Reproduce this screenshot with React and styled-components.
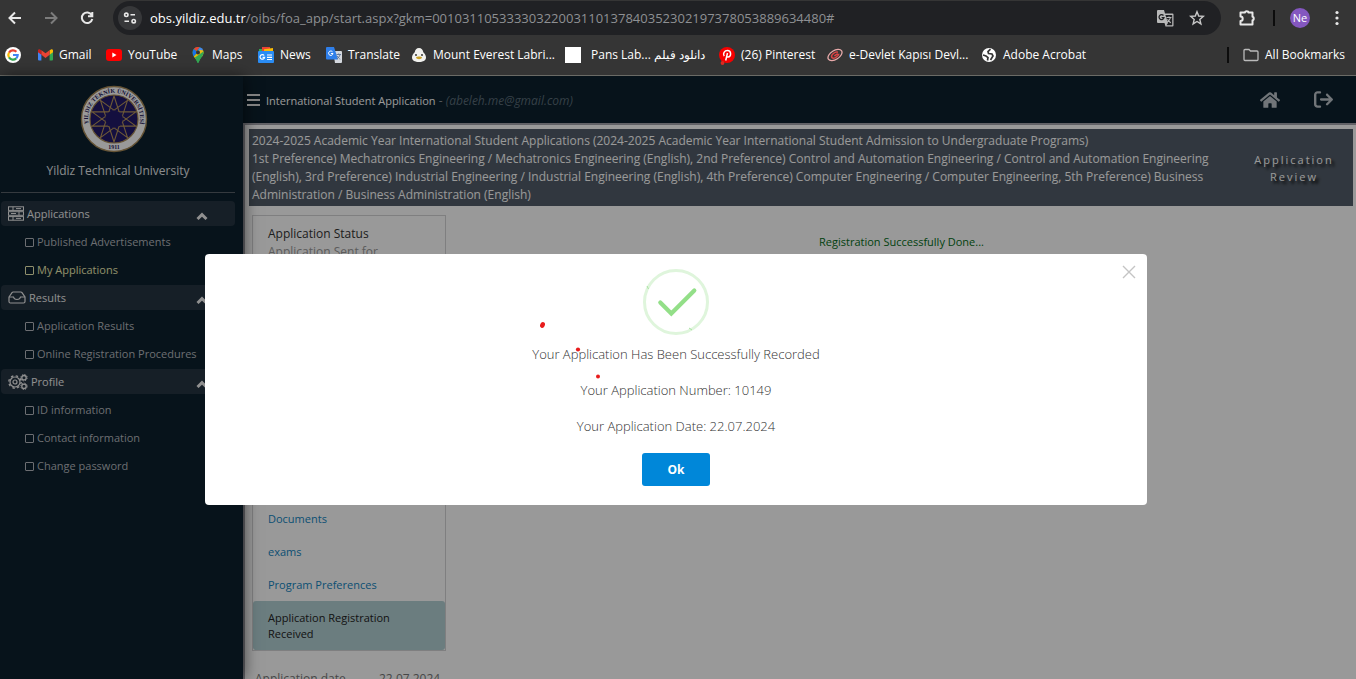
import React from "react";
import styled, { createGlobalStyle } from "styled-components";
import { FaHome } from "react-icons/fa";
import { FaArrowRightFromBracket } from "react-icons/fa6";

const ui = `"Segoe UI", "Open Sans", "Noto Sans", sans-serif`;

const GlobalStyle = createGlobalStyle`
  *, *::before { box-sizing: border-box; }
  body { margin: 0; font-family: ${ui}; font-size: 12px; }
  button, input { font-family: inherit; }
  a { text-decoration: none; color: inherit; }
  p, ul, h1, h2 { margin: 0; padding: 0; font-weight: inherit; font-size: inherit; }
  ul { list-style: none; }
`;

const Window = styled.div`
  display: flex;
  flex-direction: column;
  height: 100vh;
  overflow: hidden;
`;

/* Browser chrome */
const Chrome = styled.header`
  flex: none;
  background: #353535;
  color: #fff;
  border-bottom: 1px solid #6b6b66;
`;
const Toolbar = styled.div`
  display: flex;
  align-items: center;
  height: 36px;
  padding: 0 11px 0 6px;
`;
const ToolButton = styled.button`
  display: flex;
  align-items: center;
  justify-content: center;
  width: ${(p) => p.$w || 36}px;
  height: 32px;
  padding: 0;
  border: 0;
  background: none;
  color: ${(p) => p.$color || "#e8e8e8"};
`;
const AddressBar = styled.div`
  flex: 1;
  min-width: 0;
  display: flex;
  align-items: center;
  height: 34px;
  margin: 0 7px 0 0;
  padding: 0 8px 0 5px;
  border-radius: 17px;
  background: #202124;
`;
const SiteInfo = styled.button`
  display: flex;
  align-items: center;
  justify-content: center;
  width: 24px;
  height: 24px;
  padding: 0;
  border: 0;
  border-radius: 50%;
  background: #37383a;
  color: #e8e8e8;
`;
const Url = styled.div`
  flex: 1;
  min-width: 0;
  margin-left: 8px;
  overflow: hidden;
  white-space: nowrap;
  font-size: 13px;
  line-height: 20px;
  color: #8e9093;
  b { color: #fff; font-weight: 400; }
`;
const Separator = styled.span`
  width: 2px;
  height: 16px;
  background: #0c0c0c;
`;
const Avatar = styled.button`
  width: 20px;
  height: 20px;
  margin: 0 19px 0 8px;
  padding: 0;
  border: 0;
  border-radius: 50%;
  background: #8457c0;
  color: #fff;
  font-size: 11px;
  line-height: 20px;
`;
const Bookmarks = styled.nav`
  display: flex;
  align-items: center;
  height: 39px;
  padding: 0 11px 1px 5px;
`;
const Bookmark = styled.a`
  flex: none;
  display: flex;
  align-items: center;
  gap: ${(p) => p.$gap || 6}px;
  width: ${(p) => (p.$w ? p.$w + "px" : "auto")};
  white-space: nowrap;
  font-size: 12px;
  line-height: 16px;
  svg { flex: none; }
`;
const Spacer = styled.span`
  flex: 1;
`;

/* Web page */
const Page = styled.div`
  position: relative;
  flex: 1;
  min-height: 0;
  display: flex;
  background: #0c202d;
`;
const Sidebar = styled.aside`
  position: relative;
  z-index: 1;
  flex: none;
  width: 243px;
  padding: 9px 8px 0 1px;
  background: #0c202d;
  box-shadow: 2px 0 14px rgba(0, 0, 0, 0.5);
`;
const Brand = styled.div`
  display: flex;
  flex-direction: column;
  align-items: center;
  gap: 8px;
  padding: 0 0 11px;
  border-bottom: 1px solid #59626a;
  color: #e4e7e9;
  font-size: 12px;
  line-height: 20px;
  svg { margin-right: 8px; }
`;
const Menu = styled.nav`
  padding-top: 8px;
`;
const MenuGroup = styled.section`
  padding-bottom: 1px;
`;
const GroupTitle = styled.button`
  display: flex;
  align-items: center;
  gap: 3px;
  width: 100%;
  height: 25px;
  margin-bottom: 2px;
  padding: 0 27px 0 7px;
  border: 0;
  border-radius: 4px;
  background: #263442;
  color: #f0f0f0;
  font-size: 11px;
  font-weight: 500;
  line-height: 18px;
  text-align: left;
  span { flex: 1; }
`;
const MenuItem = styled.a`
  display: flex;
  align-items: center;
  gap: 3px;
  height: 28px;
  padding-left: 24px;
  color: ${(p) => (p.$active ? "#eeeeb4" : "#b4b8be")};
  font-size: 11px;
  font-weight: 500;
  line-height: 16px;
  white-space: nowrap;
  &::before {
    content: "";
    width: 9px;
    height: 9px;
    border: 1px solid currentColor;
    border-radius: 1px;
  }
`;
const Main = styled.div`
  flex: 1;
  min-width: 0;
  display: flex;
  flex-direction: column;
`;
const TopBar = styled.div`
  position: relative;
  z-index: 2;
  flex: none;
  display: flex;
  align-items: center;
  height: 47px;
  padding: 0 23px 0 4px;
  color: #fff;
`;
const MenuToggle = styled.button`
  display: flex;
  padding: 0;
  border: 0;
  background: none;
  color: #d4d4d4;
`;
const AppTitle = styled.h1`
  flex: 1;
  margin-left: 6px;
  padding-top: 2px;
  font-family: "Open Sans", sans-serif;
  font-size: 12px;
  line-height: 18px;
  b { font-size: 11px; font-weight: 500; }
  span { color: #8b9299; }
  em { color: #5b6c78; }
`;
const TopIcon = styled.a`
  display: flex;
  margin-left: 34px;
  color: #bcc4ca;
`;
const Content = styled.main`
  flex: 1;
  min-height: 0;
  overflow: hidden;
  padding: 4px 3px 0 4px;
  border-top: 2px solid #a4a4ac;
  border-left: 2px solid #a4a4ac;
  background: #fff;
`;
const Banner = styled.section`
  display: flex;
  align-items: center;
  justify-content: space-between;
  height: 77px;
  padding: 0 3px;
  background: #535d69;
  color: #fff;
  font-family: "Open Sans", sans-serif;
`;
const BannerText = styled.div`
  max-width: 966px;
  font-size: 12px;
  line-height: 18px;
`;
const ReviewTag = styled.div`
  width: 112px;
  text-align: center;
  font-size: 11px;
  font-weight: 500;
  line-height: 17px;
  letter-spacing: 2px;
  text-shadow: 3px 3px 3px #000;
`;
const Columns = styled.div`
  display: flex;
  padding: 9px 0 0 3px;
`;
const SideColumn = styled.div`
  flex: none;
  width: 194px;
`;
const StepPanel = styled.section`
  display: flex;
  flex-direction: column;
  height: 436px;
  border: 1px solid #d4d4d6;
`;
const Status = styled.div`
  padding: 9px 15px;
  font-size: 12px;
  line-height: 18px;
  color: #333;
  p { color: #999; }
`;
const Steps = styled.ul`
  margin-top: auto;
`;
const Step = styled.a`
  display: block;
  padding: 9px 15px 8px;
  border-radius: 3px;
  font-size: 11px;
  font-weight: 500;
  line-height: 16px;
  color: ${(p) => (p.$active ? "#222" : "#1285c1")};
  background: ${(p) => (p.$active ? "#b2d0d4" : "transparent")};
`;
const DateRow = styled.dl`
  display: flex;
  margin: 19px 3px 0;
  color: #777;
  font-size: 12px;
  line-height: 18px;
  dt { width: 124px; }
  dd { margin: 0; }
`;
const Result = styled.p`
  flex: 1;
  padding: 18px 0 0 4px;
  text-align: center;
  color: #046e18;
  font-size: 11px;
  font-weight: 500;
  line-height: 18px;
`;

/* Dialog */
const Overlay = styled.div`
  position: absolute;
  inset: 0;
  z-index: 5;
  display: flex;
  align-items: center;
  justify-content: center;
  padding: 4px 4px 0 0;
  background: rgba(0, 0, 0, 0.4);
`;
const Dialog = styled.div`
  position: relative;
  width: 70%;
  max-width: 942px;
  display: flex;
  flex-direction: column;
  align-items: center;
  padding: 15px 20px 19px;
  border-radius: 4px;
  background: #fff;
`;
const CloseButton = styled.button`
  position: absolute;
  top: 11px;
  right: 11px;
  display: flex;
  padding: 0;
  border: 0;
  background: none;
  color: #c4c4c4;
`;
const Message = styled.div`
  display: flex;
  flex-direction: column;
  gap: 18px;
  margin: 10px 0 18px;
  text-align: center;
  color: #333;
  font-weight: 300;
  font-size: 13px;
  line-height: 18px;
`;
const OkButton = styled.button`
  width: 68px;
  height: 33px;
  padding: 0;
  border: 0;
  border-radius: 3px;
  background: #0087d9;
  color: #fff;
  font-size: 12px;
  font-weight: 700;
`;
const Marks = styled.svg`
  position: absolute;
  top: 60px;
  left: 50%;
  margin-left: -141px;
  pointer-events: none;
`;

const stroke = { fill: "none", stroke: "currentColor", strokeWidth: 2 };

function Seal() {
  const point = (i, r) => {
    const a = (i * Math.PI) / 5 - Math.PI / 2;
    return `${(34 + r * Math.cos(a)).toFixed(1)},${(34 + r * Math.sin(a)).toFixed(1)}`;
  };
  const pentagram = (start) => [0, 4, 8, 2, 6].map((i) => point(i + start, 23)).join(" ");
  return (
    <svg width="68" height="68" viewBox="0 0 68 68" aria-label="Yildiz Technical University seal">
      <circle cx="34" cy="34" r="32.5" fill="#fff" stroke="#a88a58" strokeWidth="1.4" />
      <circle cx="34" cy="34" r="24" fill="#221a6a" stroke="#a88a58" strokeWidth="1.2" />
      <g fill="none" stroke="#b8965c" strokeWidth="1.1">
        <polygon points={pentagram(0)} />
        <polygon points={pentagram(1)} />
      </g>
      <circle cx="34" cy="34" r="8.8" fill="#221a6a" />
      <path id="seal-arc" d="M11.5 47 A26 26 0 1 1 56.5 47" fill="none" />
      <text fontFamily="Liberation Serif, serif" fontSize="6" fontWeight="700" fill="#28225c" textAnchor="middle">
        <textPath href="#seal-arc" startOffset="50%">YILDIZ TEKNİK ÜNİVERSİTESİ</textPath>
      </text>
      <text x="34" y="64" fontFamily="Liberation Serif, serif" fontSize="6" fontWeight="700" fill="#28225c" textAnchor="middle">1911</text>
    </svg>
  );
}

const GoogleIcon = () => (
  <svg width="16" height="16" viewBox="0 0 16 16">
    <circle cx="8" cy="8" r="8" fill="#fff" />
    <g fill="none" strokeWidth="2.2">
      <path d="M11.4 4.8A4.7 4.7 0 0 0 4 5.6" stroke="#ea4335" />
      <path d="M4 5.6a4.7 4.7 0 0 0 0 4.8" stroke="#fbbc05" />
      <path d="M4 10.4a4.7 4.7 0 0 0 7.2 1" stroke="#34a853" />
      <path d="M11.2 11.4A4.7 4.7 0 0 0 12.7 8H8" stroke="#4285f4" />
    </g>
  </svg>
);
const GmailIcon = () => (
  <svg width="15" height="12" viewBox="0 0 15 12">
    <path d="M0 2.5 3.4 5v6.5H1a1 1 0 0 1-1-1z" fill="#4285f4" />
    <path d="M15 2.5 11.6 5v6.5H14a1 1 0 0 0 1-1z" fill="#34a853" />
    <path d="M11.6 1.2 13 .4c1-.6 2 .1 2 1.2v1.6L11.6 5.8z" fill="#fbbc04" />
    <path d="M3.4 1.2 2 .4C1 -.2 0 .5 0 1.6v1.6l3.4 2.6z" fill="#c5221f" />
    <path d="M3.4 1.2 7.5 4.3l4.1-3.1v4.6L7.5 8.9 3.4 5.8z" fill="#ea4335" />
  </svg>
);
const YouTubeIcon = () => (
  <svg width="16" height="12" viewBox="0 0 16 12">
    <rect width="16" height="12" rx="3" fill="#f00" />
    <path d="M6.3 3.5 10.5 6 6.3 8.5z" fill="#fff" />
  </svg>
);
const MapsIcon = () => (
  <svg width="12" height="16" viewBox="0 0 12 16">
    <path d="M6 16c-.6 0-.7-1.600-2-3.600C2.500 10 .5 8.600.5 5.500A5.500 5.500 0 0 1 11.500 5.500c0 3.100-2 4.500-3.500 6.900C6.700 14.400 6.600 16 6 16z" fill="#34a853" />
    <path d="M1.800 2A5.500 5.500 0 0 1 7.700.3L4.300 4.200z" fill="#ea4335" />
    <path d="M7.700.3a5.500 5.500 0 0 1 3.300 2.800L7.900 6.700 6 3z" fill="#4285f4" />
    <path d="M1.800 9.500C.4 7.500.1 4 1.800 2l2.500 2.200L4.200 6.700z" fill="#1a73e8" />
    <path d="M1.800 9.500 8 2.700l3.200.8c.7 2 .2 4.200-1.200 6L3.700 12z" fill="#fbbc04" opacity=".9" />
    <path d="M2.700 10.700 11.400 4.500c.5 3.900-2 5.300-3.400 7.900C6.700 14.400 6.600 16 6 16s-.7-1.600-2-3.600z" fill="#34a853" />
    <circle cx="6" cy="5.500" r="2" fill="#353535" />
  </svg>
);
const NewsIcon = () => (
  <svg width="16" height="16" viewBox="0 0 16 16">
    <path d="M1 2h9v4H1z" fill="#34a853" />
    <path d="M4 0h8v5H4z" fill="#ea4335" />
    <path d="M6 2.200 15 1v4H6z" fill="#fbbc04" />
    <rect y="4" width="16" height="12" rx="1" fill="#2a8cf4" />
    <path d="M6.200 8.500A2.300 2.300 0 1 0 6.600 10.400H4.600M9 8h5M9 10.300h5M9 12.500h5" stroke="#fff" strokeWidth="1.200" fill="none" />
  </svg>
);
const TranslateIcon = () => (
  <svg width="16" height="16" viewBox="0 0 16 16">
    <path d="M7 4h8a1 1 0 0 1 1 1v10a1 1 0 0 1-1 1H9z" fill="#d4d8de" />
    <path d="M1 0h7l4 12.500H1a1 1 0 0 1-1-1V1a1 1 0 0 1 1-1z" fill="#2f7fea" />
    <path d="M6.500 4.800A2.200 2.200 0 1 0 7 6.500H4.900" stroke="#fff" fill="none" />
    <path d="M10.500 7.500H15M12.700 6.500v1M14 7.500c-.4 2-1.500 3.300-3 4.300M11.300 9c.7 1.500 1.900 2.700 3 3.200" stroke="#5c7397" fill="none" strokeWidth=".9" />
  </svg>
);
const DuckIcon = () => (
  <svg width="14" height="16" viewBox="0 0 14 16">
    <path d="M7 1c2.600 0 3.800 2 4.300 4.200C13 6.500 14 8.800 14 10.500 14 13.500 11 15 7 15S0 13.500 0 10.500C0 8.800 1 6.500 2.700 5.200 3.200 3 4.400 1 7 1z" fill="#f1f1ee" />
    <circle cx="4" cy="8" r=".9" fill="#222" />
    <circle cx="10" cy="8" r=".9" fill="#222" />
    <path d="M4 10.500c1-1.400 5-1.400 6 0-.6 2.200-5.400 2.200-6 0z" fill="#c9a227" />
  </svg>
);
const BlankIcon = () => (
  <svg width="16" height="16"><rect width="16" height="16" fill="#fff" /></svg>
);
const PinterestIcon = () => (
  <svg width="16" height="20" viewBox="0 0 16 20">
    <circle cx="8" cy="10" r="8" fill="#f60000" />
    <path d="M5.200 11.200C3.500 8.500 5.500 5.600 8.400 5.600c4.300 0 4 6.400.7 6.400-1 0-1.400-.7-1.400-.7M8.500 8 6.700 15.500" stroke="#fff" strokeWidth="1.500" fill="none" />
    <circle cx="3.500" cy="18" r="1.900" fill="#dd2a20" />
  </svg>
);
const DevletIcon = () => (
  <svg width="16" height="14" viewBox="0 0 16 14" fill="none">
    <g transform="rotate(-32 8 7)">
      <ellipse cx="8" cy="7" rx="7.800" ry="4.400" stroke="#e8aaaa" strokeWidth="1.300" />
      <path d="M12 6.200C10 3.800 4.500 4.600 4 7.200s6 3.200 8 .8M7 7.400h4" stroke="#dd4545" strokeWidth="1.500" />
    </g>
  </svg>
);
const GlobeIcon = () => (
  <svg width="16" height="16" viewBox="0 0 16 16">
    <circle cx="8" cy="8" r="7" fill="#fff" />
    <path d="M9.500 2.200 7 4.500l.5 2 3.500.5 1 2-2.500 4M2 8l3 1 2 1.500-.5 3" stroke="#353535" strokeWidth="1.700" fill="none" />
  </svg>
);
const FolderIcon = () => (
  <svg width="16" height="14" viewBox="0 0 16 14">
    <path d="M1 2.500a1 1 0 0 1 1-1h4L7.500 3H14a1 1 0 0 1 1 1v7.500a1 1 0 0 1-1 1H2a1 1 0 0 1-1-1z" fill="none" stroke="#bbb" strokeWidth="1.300" />
  </svg>
);

const bookmarks = [
  { label: "", name: "Google", icon: <GoogleIcon />, w: 33 },
  { label: "Gmail", icon: <GmailIcon />, w: 68 },
  { label: "YouTube", icon: <YouTubeIcon />, w: 86 },
  { label: "Maps", icon: <MapsIcon />, w: 66, gap: 8 },
  { label: "News", icon: <NewsIcon />, w: 68 },
  { label: "Translate", icon: <TranslateIcon />, w: 86 },
  { label: "Mount Everest Labri...", icon: <DuckIcon />, w: 153, gap: 7 },
  { label: "Pans Lab... دانلود فیلم", icon: <BlankIcon />, w: 154, gap: 10 },
  { label: "(26) Pinterest", icon: <PinterestIcon />, w: 108 },
  { label: "e-Devlet Kapısı Devl...", icon: <DevletIcon />, w: 154 },
  { label: "Adobe Acrobat", icon: <GlobeIcon /> },
];

const ServerIcon = () => (
  <svg width="16" height="15" viewBox="0 0 16 15" fill="none" stroke="currentColor">
    <rect x=".5" y=".8" width="15" height="3.600" />
    <rect x=".5" y="5.700" width="15" height="3.600" />
    <rect x=".5" y="10.600" width="15" height="3.600" />
    <path d="M8 2.600h5M3 7.500h5M8 12.400h5M11 5.700v3.600M5 .8v3.600M5 10.600v3.600" />
  </svg>
);
const InboxIcon = () => (
  <svg width="18" height="13" viewBox="0 0 18 13" fill="none" stroke="currentColor" strokeWidth="1.200">
    <path d="M1 6 4 1.600Q4.400 1 5.200 1h7.600q.8 0 1.200.6L17 6v4.500q0 1.500-1.500 1.500h-13Q1 12 1 10.500z" />
    <path d="M1 6h4.500q.5 2.500 3.500 2.500T12.500 6H17" />
  </svg>
);
const GearsIcon = () => (
  <svg width="20" height="16" viewBox="0 0 20 16" fill="none" stroke="currentColor">
    <circle cx="7" cy="8" r="5" strokeWidth="1.200" />
    <circle cx="7" cy="8" r="6.200" strokeWidth="1.400" strokeDasharray="2.400 2.470" />
    <circle cx="7" cy="8" r="2" strokeWidth="1.200" />
    <circle cx="16" cy="3.700" r="2.200" strokeWidth="1.300" />
    <circle cx="16" cy="3.700" r="3.200" strokeDasharray="1.300 1.210" />
    <circle cx="16" cy="12.300" r="2.200" strokeWidth="1.300" />
    <circle cx="16" cy="12.300" r="3.200" strokeDasharray="1.300 1.210" />
  </svg>
);
const ChevronIcon = () => (
  <svg width="12" height="8" viewBox="0 0 12 8">
    <path d="M1.500 7 6 2.600 10.500 7" fill="none" stroke="#f0f0f0" strokeWidth="2.900" />
  </svg>
);
const Chevron = styled.i`
  display: flex;
  padding-top: 5px;
`;

const menu = [
  { title: "Applications", icon: <ServerIcon />, items: ["Published Advertisements", "My Applications"] },
  { title: "Results", icon: <InboxIcon />, items: ["Application Results", "Online Registration Procedures"] },
  { title: "Profile", icon: <GearsIcon />, items: ["ID information", "Contact information", "Change password"] },
];

export default function App() {
  return (
    <>
      <GlobalStyle />
      <Window>
        <Chrome>
          <Toolbar>
            <ToolButton $w={18} aria-label="Back">
              <svg width="14" height="14" viewBox="0 0 14 14" {...stroke}><path d="M13 7H2M7 1.500 1.500 7 7 12.500" /></svg>
            </ToolButton>
            <ToolButton $w={54} $color="#7c7c7c" aria-label="Forward">
              <svg width="14" height="14" viewBox="0 0 14 14" {...stroke}><path d="M1 7h11M7 1.500 12.500 7 7 12.500" /></svg>
            </ToolButton>
            <ToolButton $w={18} aria-label="Reload">
              <svg width="14" height="14" viewBox="0 0 14 14" {...stroke}><path d="M11.700 4A5.300 5.300 0 1 0 12.300 8M12.300 1v4.300H8" /></svg>
            </ToolButton>
            <ToolButton as="span" $w={17} />
            <AddressBar>
              <SiteInfo aria-label="Site information">
                <svg width="14" height="12" viewBox="0 0 14 12" fill="none" stroke="currentColor" strokeWidth="1.600">
                  <circle cx="3.300" cy="2.800" r="1.700" /><path d="M7.500 2.800H12M1.500 9.200H6" /><circle cx="10.700" cy="9.200" r="1.700" />
                </svg>
              </SiteInfo>
              <Url><b>obs.yildiz.edu.tr</b>/oibs/foa_app/start.aspx?gkm=00103110533330322003110137840352302197378053889634480#</Url>
              <ToolButton $w={32} $color="#b8b8b8" aria-label="Translate this page">
                <svg width="17" height="17" viewBox="0 0 17 17">
                  <path d="M1 0h6l1 3.500h7.500a1 1 0 0 1 1 1v11a1 1 0 0 1-1 1H8.500L7.500 13H1a1 1 0 0 1-1-1V1a1 1 0 0 1 1-1z" fill="currentColor" />
                  <path d="M8.400 5h6.800v10.200H9.400L11 13z" fill="#202124" />
                  <path d="M6.500 5.500A2.500 2.500 0 1 0 7 7.700H4.600" stroke="#202124" strokeWidth="1.300" fill="none" />
                  <path d="M9.500 7.500h5M12 6.500v1M13.500 7.500c-.5 2.200-1.700 3.500-3.200 4.500M10.500 9.300c.8 1.500 2 2.700 3.300 3.400" stroke="currentColor" strokeWidth="1.100" fill="none" />
                </svg>
              </ToolButton>
              <ToolButton $w={32} $color="#c8c8c8" aria-label="Bookmark this tab">
                <svg width="16" height="16" viewBox="0 0 16 16"><path d="m8 1.700 1.700 4.300 4.600.4-3.500 3 1.100 4.500L8 11.500l-3.900 2.400 1.100-4.500-3.500-3L6.300 6z" fill="none" stroke="currentColor" strokeWidth="1.400" /></svg>
              </ToolButton>
            </AddressBar>
            <ToolButton $w={38} aria-label="Extensions">
              <svg width="18" height="18" viewBox="0 0 18 18" {...stroke}><path d="M2.500 3.500H7a1.700 1.200 0 0 1 3.400 0H14.500v4.300a1.200 1.700 0 0 1 0 3.400V15.500H2.500v-3.600a2.100 2.100 0 0 0 0-4.400z" strokeLinejoin="round" /></svg>
            </ToolButton>
            <ToolButton as="span" $w={16}><Separator /></ToolButton>
            <Avatar aria-label="Profile">Ne</Avatar>
            <ToolButton $w={16} aria-label="Menu">
              <svg width="4" height="16" viewBox="0 0 4 16" fill="currentColor"><circle cx="2" cy="2.500" r="1.600" /><circle cx="2" cy="8" r="1.600" /><circle cx="2" cy="13.500" r="1.600" /></svg>
            </ToolButton>
          </Toolbar>
          <Bookmarks>
            {bookmarks.map((b) => (
              <Bookmark href="#" key={b.name || b.label} $w={b.w} $gap={b.gap} aria-label={b.name || b.label}>
                {b.icon}
                {b.label}
              </Bookmark>
            ))}
            <Spacer />
            <ToolButton as="span" $w={30}><Separator /></ToolButton>
            <Bookmark href="#">
              <FolderIcon />
              All Bookmarks
            </Bookmark>
          </Bookmarks>
        </Chrome>

        <Page>
          <Sidebar>
            <Brand>
              <Seal />
              Yildiz Technical University
            </Brand>
            <Menu>
              {menu.map((g) => (
                <MenuGroup key={g.title}>
                  <GroupTitle>
                    {g.icon}
                    <span>{g.title}</span>
                    <Chevron><ChevronIcon /></Chevron>
                  </GroupTitle>
                  {g.items.map((t) => (
                    <MenuItem href="#" key={t} $active={t === "My Applications"}>{t}</MenuItem>
                  ))}
                </MenuGroup>
              ))}
            </Menu>
          </Sidebar>

          <Main>
            <TopBar>
              <MenuToggle aria-label="Toggle menu">
                <svg width="13" height="12" viewBox="0 0 13 12" stroke="currentColor" strokeWidth="2"><path d="M0 1h13M0 6h13M0 11h13" /></svg>
              </MenuToggle>
              <AppTitle>
                <b>International Student Application</b> <span>-</span> <em>(abeleh.me@gmail.com)</em>
              </AppTitle>
              <TopIcon href="#" aria-label="Home"><FaHome size={20} /></TopIcon>
              <TopIcon href="#" aria-label="Sign out"><FaArrowRightFromBracket size={19} /></TopIcon>
            </TopBar>
            <Content>
              <Banner>
                <BannerText>
                  <p>2024-2025 Academic Year International Student Applications (2024-2025 Academic Year International Student Admission to Undergraduate Programs)</p>
                  <p>1st Preference) Mechatronics Engineering / Mechatronics Engineering (English), 2nd Preference) Control and Automation Engineering / Control and Automation Engineering (English), 3rd Preference) Industrial Engineering / Industrial Engineering (English), 4th Preference) Computer Engineering / Computer Engineering, 5th Preference) Business Administration / Business Administration (English)</p>
                </BannerText>
                <ReviewTag>Application Review</ReviewTag>
              </Banner>
              <Columns>
                <SideColumn>
                  <StepPanel>
                    <Status>
                      Application Status
                      <p>Application Sent for</p>
                    </Status>
                    <Steps>
                      <li><Step href="#">Documents</Step></li>
                      <li><Step href="#">exams</Step></li>
                      <li><Step href="#">Program Preferences</Step></li>
                      <li><Step href="#" $active>Application Registration Received</Step></li>
                    </Steps>
                  </StepPanel>
                  <DateRow>
                    <dt>Application date</dt>
                    <dd>22.07.2024</dd>
                  </DateRow>
                </SideColumn>
                <Result>Registration Successfully Done...</Result>
              </Columns>
            </Content>
          </Main>

          <Overlay>
            <Dialog role="dialog" aria-modal="true">
              <CloseButton aria-label="Close">
                <svg width="14" height="14" viewBox="0 0 14 14" stroke="currentColor" strokeWidth="1.400"><path d="M1 1l12 12M13 1 1 13" /></svg>
              </CloseButton>
              <svg width="66" height="66" viewBox="0 0 66 66" fill="none">
                <circle cx="33" cy="33" r="31.500" stroke="#dff5dc" strokeWidth="3" />
                <path d="M17.300 33.500 28.300 44.500 51.300 21.500" stroke="#93df88" strokeWidth="4.200" strokeLinecap="round" />
                <path d="m4 17 1.500 3M46 59l3 2" stroke="#a9e3a2" />
              </svg>
              <Message>
                <p>Your Application Has Been Successfully Recorded</p>
                <p>Your Application Number: 10149</p>
                <p>Your Application Date: 22.07.2024</p>
              </Message>
              <OkButton>Ok</OkButton>
              <Marks width="70" height="70" viewBox="0 0 70 70" fill="#e81c1c">
                <ellipse cx="7.500" cy="11" rx="2.300" ry="2.900" transform="rotate(25 7.500 11)" />
                <circle cx="43" cy="35.500" r="2.100" />
                <circle cx="63" cy="62.500" r="2" />
              </Marks>
            </Dialog>
          </Overlay>
        </Page>
      </Window>
    </>
  );
}
